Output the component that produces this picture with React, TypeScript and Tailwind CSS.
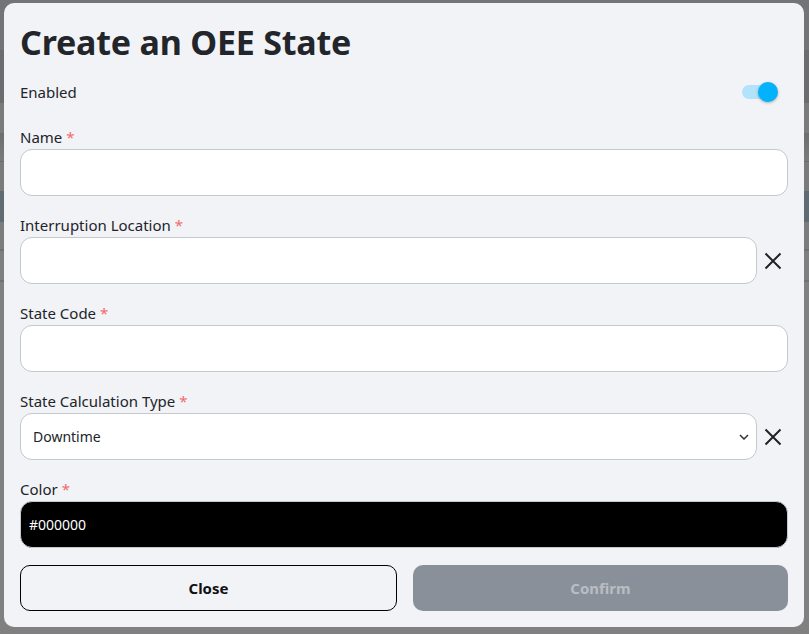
import React from "react"

const font = { fontFamily: '"Noto Sans", "Open Sans", sans-serif' }

function XIcon() {
  return (
    <svg width="18" height="18" viewBox="0 0 18 18" className="text-[#222]">
      <path d="M1.5 1.5 L16.5 16.5 M16.5 1.5 L1.5 16.5" stroke="currentColor" strokeWidth="2" fill="none" />
    </svg>
  )
}

function Label({ text }: { text: string }) {
  return (
    <div className="h-6 flex items-center text-[15px] text-[#212529]">
      {text}
      <span className="ml-1 text-[#f26b6b]">*</span>
    </div>
  )
}

function Field({ label, children }: { label: string; children: React.ReactNode }) {
  return (
    <div className="mb-[17px]">
      <Label text={label} />
      {children}
    </div>
  )
}

const inputCls =
  "block w-full h-[47px] rounded-xl border border-[#c5c8cd] bg-white px-3 text-[14px] text-[#212529] outline-none"

function ClearButton() {
  return (
    <button className="w-[31px] h-[47px] flex items-center justify-center shrink-0">
      <XIcon />
    </button>
  )
}

export default function App() {
  return (
    <div className="relative w-[809px] h-[634px] overflow-hidden bg-[#808080]" style={font}>
      {/* dimmed page behind the dialog */}
      <div className="absolute inset-0 flex flex-col">
        <div className="h-[50px] bg-[#737476]" />
        <div className="h-[53px] bg-[#6a6c6e]" />
        <div className="h-[30px] bg-[#7b7b7b]" />
        <div className="h-[29px] bg-gradient-to-b from-[#6e6e6e] to-[#7b7b7b] border-b border-[#6c6c6c]" />
        <div className="h-[29px] bg-[#7b7b7b]" />
        <div className="h-[31px] bg-[#5f6d73]" />
        <div className="h-[29px] bg-[#7c7c7c] border-b-2 border-[#707070]" />
        <div className="h-[31px] bg-[#7f7f7f] border-b-2 border-[#727272]" />
        <div className="flex-1 bg-[#808080]" />
      </div>

      <div className="absolute left-[4px] top-[3px] w-[800px] h-[624px] rounded-[10px] bg-[#f2f3f7] px-4 pt-4 pb-4 text-[#212529]">
        <h1 className="text-[34px] leading-[46px] font-bold text-[#22262a] tracking-[-0.2px]">Create an OEE State</h1>

        <div className="mt-[7px] h-[40px] flex items-center justify-between">
          <span className="text-[15px]">Enabled</span>
          <div className="relative w-[36px] h-[20px] mr-[10px]">
            <div className="absolute left-0 top-[3px] w-[34px] h-[14px] rounded-full bg-[#b3e3fb]" />
            <div className="absolute right-0 top-0 w-[20px] h-[20px] rounded-full bg-[#03b2fd] shadow-[0_1px_3px_rgba(0,0,0,0.3)]" />
          </div>
        </div>

        <div className="mt-[13px]">
          <Field label="Name">
            <input className={inputCls} />
          </Field>

          <Field label="Interruption Location">
            <div className="flex items-center">
              <input className={inputCls} />
              <ClearButton />
            </div>
          </Field>

          <Field label="State Code">
            <input className={inputCls} />
          </Field>

          <Field label="State Calculation Type">
            <div className="flex items-center">
              <div className="relative flex-1">
                <select className={`${inputCls} appearance-none text-[13px]`} defaultValue="Downtime">
                  <option>Downtime</option>
                </select>
                <svg
                  className="absolute right-[8px] top-[21px] pointer-events-none"
                  width="10"
                  height="6"
                  viewBox="0 0 10 6"
                >
                  <path d="M1 1 L5 5 L9 1" stroke="#333" strokeWidth="1.5" fill="none" />
                </svg>
              </div>
              <ClearButton />
            </div>
          </Field>

          <div>
            <Label text="Color" />
            <div className="h-[47px] rounded-xl bg-black border border-[#c5c8cd] flex items-center px-2 text-[14px] text-white">
              #000000
            </div>
          </div>

          <div className="mt-[17px] flex gap-4">
            <button className="flex-1 h-[46px] rounded-[10px] border border-black bg-transparent text-[15px] font-bold text-[#111]">
              Close
            </button>
            <button className="flex-1 h-[46px] rounded-[10px] bg-[#8a9099] text-[15px] font-bold text-[#b9bdc3]">
              Confirm
            </button>
          </div>
        </div>
      </div>
    </div>
  )
}
